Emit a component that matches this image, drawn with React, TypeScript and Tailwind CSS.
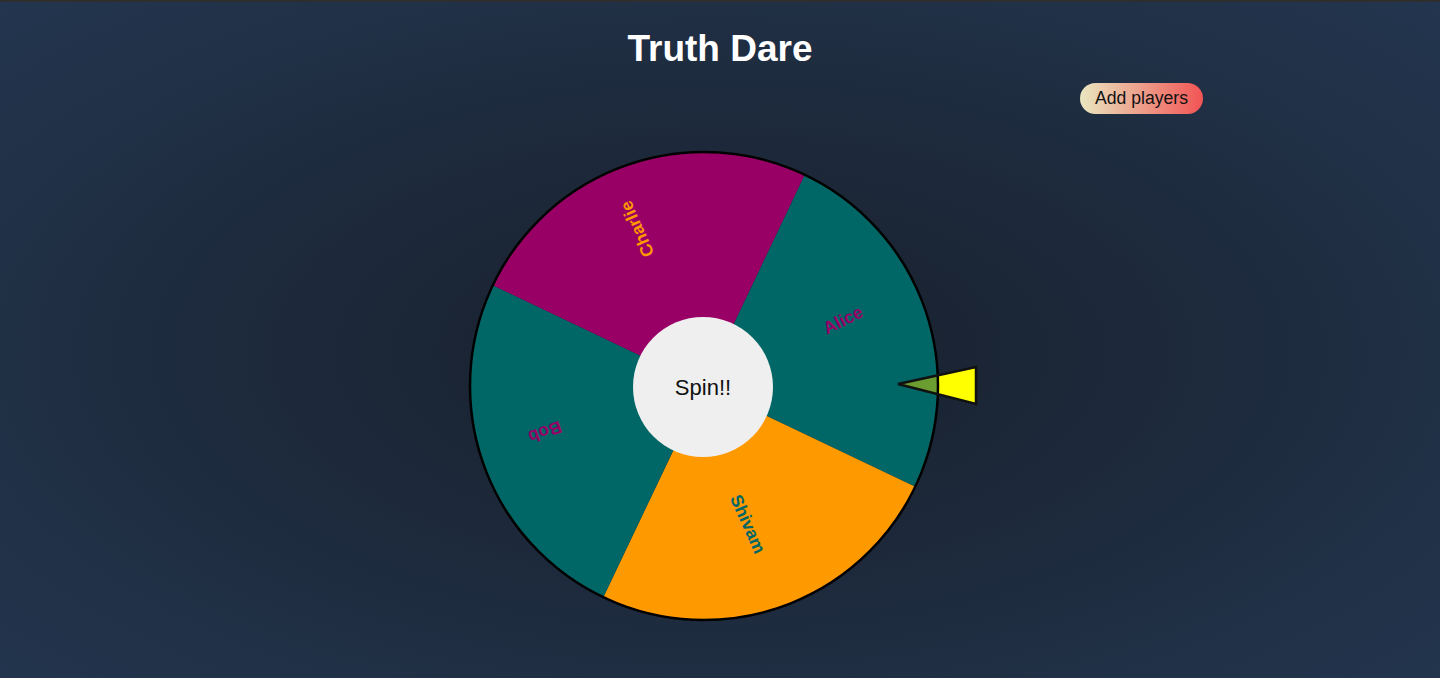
const players = [
  { name: 'Alice', color: '#006666', text: '#990066', d: 'M237 237 L337.7 25.8 A234 234 0 0 1 448.2 337.7 Z', x: 376, y: 171, rot: -27 },
  { name: 'Shivam', color: '#ff9900', text: '#006666', d: 'M237 237 L448.2 337.7 A234 234 0 0 1 136.3 448.2 Z', x: 281, y: 375, rot: 66 },
  { name: 'Bob', color: '#006666', text: '#990066', d: 'M237 237 L136.3 448.2 A234 234 0 0 1 25.8 136.3 Z', x: 78, y: 283, rot: 160 },
  { name: 'Charlie', color: '#990066', text: '#ff9900', d: 'M237 237 L25.8 136.3 A234 234 0 0 1 337.7 25.8 Z', x: 170, y: 80, rot: 246 },
]

function Wheel() {
  return (
    <svg width="512" height="474" viewBox="0 0 512 474" className="block">
      <defs>
        <clipPath id="wheel-clip">
          <circle cx="237" cy="237" r="234" />
        </clipPath>
      </defs>
      {players.map((p) => (
        <path key={p.name} d={p.d} fill={p.color} />
      ))}
      {players.map((p) => (
        <text
          key={p.name + '-label'}
          x={p.x}
          y={p.y}
          fill={p.text}
          fontSize="17.5"
          fontWeight="bold"
          textAnchor="middle"
          dominantBaseline="central"
          transform={`rotate(${p.rot} ${p.x} ${p.y})`}
          style={{ fontFamily: '"Liberation Sans", Arial, sans-serif' }}
        >
          {p.name}
        </text>
      ))}
      {/* pointer */}
      <polygon points="431,235 509,218 509,255" fill="#ffff00" />
      <polygon points="431,235 509,218 509,255" fill="#6c9d30" clipPath="url(#wheel-clip)" />
      <circle cx="237" cy="237" r="234" fill="none" stroke="#000" strokeWidth="2.5" />
      <polygon points="431,235 509,218 509,255" fill="none" stroke="#111" strokeWidth="2.5" strokeLinejoin="miter" />
      <circle cx="236" cy="238" r="70" fill="#efefef" className="cursor-pointer" />
      <text
        x="236"
        y="238"
        fontSize="22"
        textAnchor="middle"
        dominantBaseline="central"
        fill="#111"
        style={{ fontFamily: '"Liberation Sans", Arial, sans-serif' }}
      >
        Spin!!
      </text>
    </svg>
  )
}

export default function App() {
  return (
    <div className="min-h-screen w-full border-t-2 border-[#2e2e2e] bg-[radial-gradient(ellipse_at_50%_52%,#17202c_0%,#1c2738_35%,#23364f_100%)] font-['Liberation_Sans',Arial,sans-serif] flex flex-col items-center">
      <h1 className="mt-[28px] text-[37px] leading-none font-bold text-white">Truth Dare</h1>
      <div className="w-[966px] flex justify-end mt-[16px]">
        <button className="h-[31px] px-[15px] rounded-full bg-[linear-gradient(to_right,#e9e7c0,#f25454)] text-[17.6px] text-[#111] leading-none">
          Add players
        </button>
      </div>
      <div className="mt-[35px] pl-[6px]">
        <Wheel />
      </div>
    </div>
  )
}
